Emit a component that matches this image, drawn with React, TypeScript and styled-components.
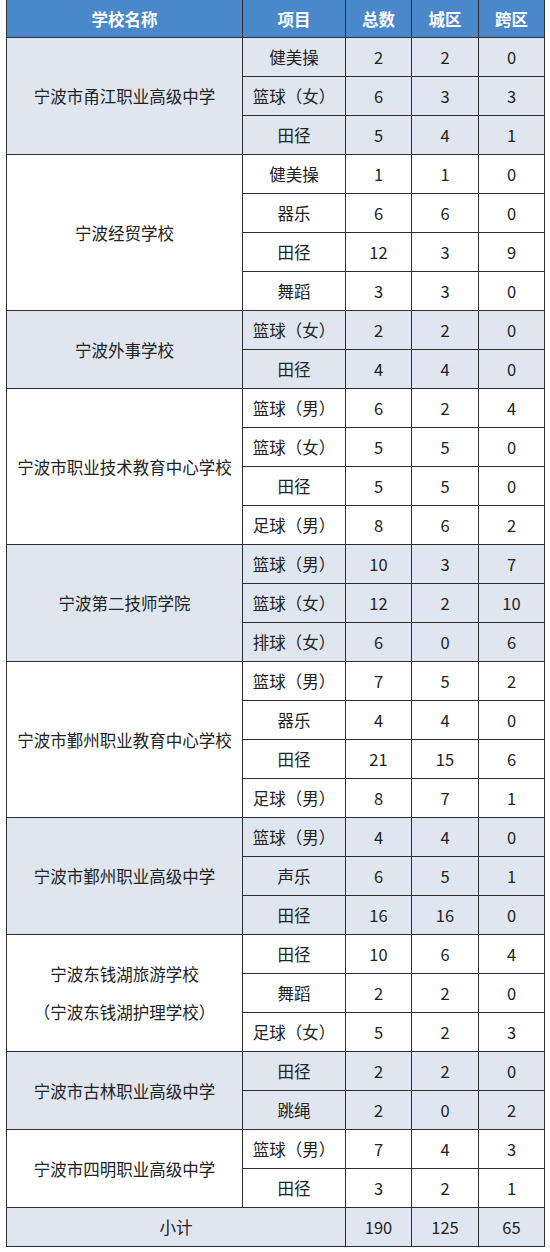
import React from 'react';
import styled, { createGlobalStyle } from 'styled-components';

type Item = { name: string; total: number; city: number; cross: number };
type School = { name: string[]; items: Item[] };

const schools: School[] = [
  {
    name: ['宁波市甬江职业高级中学'],
    items: [
      { name: '健美操', total: 2, city: 2, cross: 0 },
      { name: '篮球（女）', total: 6, city: 3, cross: 3 },
      { name: '田径', total: 5, city: 4, cross: 1 },
    ],
  },
  {
    name: ['宁波经贸学校'],
    items: [
      { name: '健美操', total: 1, city: 1, cross: 0 },
      { name: '器乐', total: 6, city: 6, cross: 0 },
      { name: '田径', total: 12, city: 3, cross: 9 },
      { name: '舞蹈', total: 3, city: 3, cross: 0 },
    ],
  },
  {
    name: ['宁波外事学校'],
    items: [
      { name: '篮球（女）', total: 2, city: 2, cross: 0 },
      { name: '田径', total: 4, city: 4, cross: 0 },
    ],
  },
  {
    name: ['宁波市职业技术教育中心学校'],
    items: [
      { name: '篮球（男）', total: 6, city: 2, cross: 4 },
      { name: '篮球（女）', total: 5, city: 5, cross: 0 },
      { name: '田径', total: 5, city: 5, cross: 0 },
      { name: '足球（男）', total: 8, city: 6, cross: 2 },
    ],
  },
  {
    name: ['宁波第二技师学院'],
    items: [
      { name: '篮球（男）', total: 10, city: 3, cross: 7 },
      { name: '篮球（女）', total: 12, city: 2, cross: 10 },
      { name: '排球（女）', total: 6, city: 0, cross: 6 },
    ],
  },
  {
    name: ['宁波市鄞州职业教育中心学校'],
    items: [
      { name: '篮球（男）', total: 7, city: 5, cross: 2 },
      { name: '器乐', total: 4, city: 4, cross: 0 },
      { name: '田径', total: 21, city: 15, cross: 6 },
      { name: '足球（男）', total: 8, city: 7, cross: 1 },
    ],
  },
  {
    name: ['宁波市鄞州职业高级中学'],
    items: [
      { name: '篮球（男）', total: 4, city: 4, cross: 0 },
      { name: '声乐', total: 6, city: 5, cross: 1 },
      { name: '田径', total: 16, city: 16, cross: 0 },
    ],
  },
  {
    name: ['宁波东钱湖旅游学校', '（宁波东钱湖护理学校）'],
    items: [
      { name: '田径', total: 10, city: 6, cross: 4 },
      { name: '舞蹈', total: 2, city: 2, cross: 0 },
      { name: '足球（女）', total: 5, city: 2, cross: 3 },
    ],
  },
  {
    name: ['宁波市古林职业高级中学'],
    items: [
      { name: '田径', total: 2, city: 2, cross: 0 },
      { name: '跳绳', total: 2, city: 0, cross: 2 },
    ],
  },
  {
    name: ['宁波市四明职业高级中学'],
    items: [
      { name: '篮球（男）', total: 7, city: 4, cross: 3 },
      { name: '田径', total: 3, city: 2, cross: 1 },
    ],
  },
];

const GlobalStyle = createGlobalStyle`
  body {
    margin: 0;
    background: #ffffff;
    font-family: "Noto Sans CJK SC", "Noto Sans", sans-serif;
  }
`;

const Page = styled.div`
  padding: 0 6px;
`;

const Table = styled.table`
  width: 538px;
  border-collapse: collapse;
  table-layout: fixed;
  border: 1.5px solid #2e2e2e;
  border-top: none;
  color: #222;
  font-size: 16.5px;
`;

const HeadCell = styled.th`
  height: 37px;
  padding: 0;
  background: #4b87cb;
  color: #ffffff;
  font-weight: 700;
  font-size: 16.5px;
  text-align: center;
  border-left: 1px solid #2e2e2e;
  border-right: 1px solid #2e2e2e;
  border-bottom: 1px solid #2e2e2e;
`;

const Row = styled.tr<{ $shaded: boolean }>`
  background: ${(p) => (p.$shaded ? '#dfe6ef' : '#ffffff')};
`;

const Cell = styled.td`
  height: 38px;
  padding: 0;
  text-align: center;
  vertical-align: middle;
  border: 1px solid #2e2e2e;
  line-height: 1;
`;

const SchoolCell = styled(Cell)`
  line-height: 38px;
`;

export default function App() {
  const sum = (k: keyof Omit<Item, 'name'>) =>
    schools.reduce((a, s) => a + s.items.reduce((b, i) => b + i[k], 0), 0);

  return (
    <Page>
      <GlobalStyle />
      <Table>
        <colgroup>
          <col style={{ width: 236 }} />
          <col style={{ width: 103 }} />
          <col style={{ width: 66 }} />
          <col style={{ width: 67 }} />
          <col style={{ width: 66 }} />
        </colgroup>
        <thead>
          <tr>
            <HeadCell>学校名称</HeadCell>
            <HeadCell>项目</HeadCell>
            <HeadCell>总数</HeadCell>
            <HeadCell>城区</HeadCell>
            <HeadCell>跨区</HeadCell>
          </tr>
        </thead>
        <tbody>
          {schools.map((s, si) =>
            s.items.map((it, ii) => (
              <Row key={`${si}-${ii}`} $shaded={si % 2 === 0}>
                {ii === 0 && (
                  <SchoolCell rowSpan={s.items.length}>
                    {s.name.map((n) => (
                      <div key={n}>{n}</div>
                    ))}
                  </SchoolCell>
                )}
                <Cell>{it.name}</Cell>
                <Cell>{it.total}</Cell>
                <Cell>{it.city}</Cell>
                <Cell>{it.cross}</Cell>
              </Row>
            ))
          )}
          <Row $shaded>
            <Cell colSpan={2}>小计</Cell>
            <Cell>{sum('total')}</Cell>
            <Cell>{sum('city')}</Cell>
            <Cell>{sum('cross')}</Cell>
          </Row>
        </tbody>
      </Table>
    </Page>
  );
}
